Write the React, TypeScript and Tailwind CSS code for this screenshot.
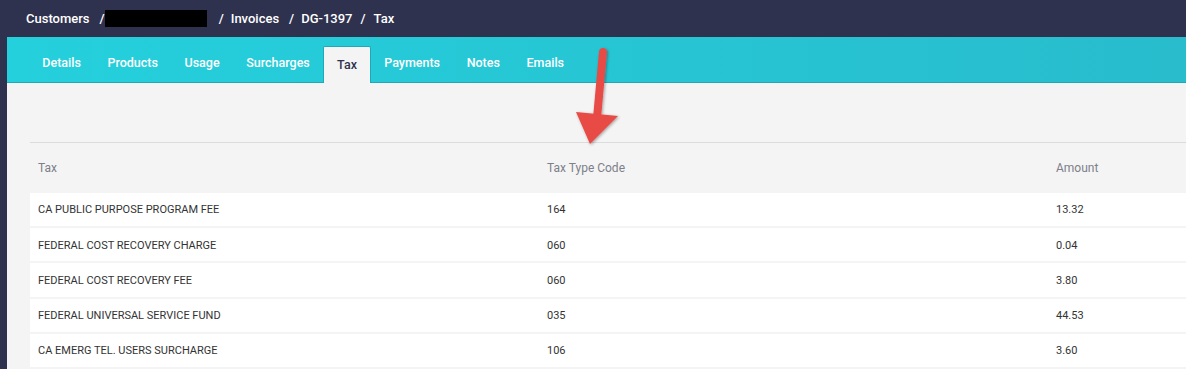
import React from 'react'

const tabs = ['Details', 'Products', 'Usage', 'Surcharges', 'Tax', 'Payments', 'Notes', 'Emails']

const rows = [
  ['CA PUBLIC PURPOSE PROGRAM FEE', '164', '13.32'],
  ['FEDERAL COST RECOVERY CHARGE', '060', '0.04'],
  ['FEDERAL COST RECOVERY FEE', '060', '3.80'],
  ['FEDERAL UNIVERSAL SERVICE FUND', '035', '44.53'],
  ['CA EMERG TEL. USERS SURCHARGE', '106', '3.60'],
]

function Arrow() {
  return (
    <svg width="60" height="110" viewBox="0 0 60 110" className="absolute left-[570px] top-[40px]">
      <defs>
        <filter id="sh" x="-50%" y="-50%" width="200%" height="200%">
          <feDropShadow dx="1" dy="1" stdDeviation="1.5" floodColor="#000" floodOpacity="0.35" />
        </filter>
      </defs>
      <g filter="url(#sh)">
        <line x1="33" y1="12" x2="27" y2="78" stroke="#e84b44" strokeWidth="8" strokeLinecap="round" />
        <polygon points="6,72 48,76 20,104" fill="#e84b44" />
      </g>
    </svg>
  )
}

export default function App() {
  return (
    <div
      className="relative h-[369px] w-[1186px] overflow-hidden bg-[#2f324f]"
      style={{ fontFamily: 'Roboto, "Noto Sans", sans-serif' }}
    >
      {/* breadcrumb */}
      <div className="flex h-[37px] items-center pl-[26px] text-[13px] font-medium text-white">
        <span>Customers</span>
        <span className="ml-[10px]">/</span>
        <span className="ml-[0px] h-[17px] w-[102px] bg-black" />
        <span className="ml-[12px]">/</span>
        <span className="ml-[7px]">Invoices</span>
        <span className="ml-[10px]">/</span>
        <span className="ml-[7px]">DG-1397</span>
        <span className="ml-[8px]">/</span>
        <span className="ml-[8px]">Tax</span>
      </div>

      <div className="ml-[7px] flex flex-col">
        {/* tab bar */}
        <div className="flex h-[46px] items-end border-b border-[#1fa9b8] bg-gradient-to-r from-[#24d0dc] to-[#28bccd] pl-[22px]">
          {tabs.map((t) =>
            t === 'Tax' ? (
              <div
                key={t}
                className="-mb-px flex h-[37px] items-center rounded-t-[2px] border border-b-0 border-[#1fa9b8] bg-[#f4f4f4] px-[13px] text-[12.5px] font-medium text-[#2f324f]"
              >
                {t}
              </div>
            ) : (
              <div key={t} className="flex h-[37px] items-center px-[13.3px] text-[12.5px] font-medium text-white">
                {t}
              </div>
            )
          )}
        </div>

        {/* content */}
        <div className="h-[300px] bg-[#f4f4f4] pl-[23px] pt-[59px]">
          <div className="border-t border-[#dcdcdc]">
            <div className="grid h-[50px] grid-cols-[509px_509px_1fr] items-center text-[12px] text-[#7d7f8a]">
              <div className="pl-[8px]">Tax</div>
              <div className="pl-[8px]">Tax Type Code</div>
              <div className="pl-[8px]">Amount</div>
            </div>
            <div className="flex flex-col gap-[2px]">
              {rows.map((r) => (
                <div
                  key={r[0]}
                  className="grid h-[33.2px] grid-cols-[509px_509px_1fr] items-center bg-white pt-[2px] text-[11px] text-[#333]"
                >
                  <div className="pl-[8px]">{r[0]}</div>
                  <div className="pl-[8px]">{r[1]}</div>
                  <div className="pl-[8px]">{r[2]}</div>
                </div>
              ))}
            </div>
          </div>
        </div>
      </div>

      <Arrow />
    </div>
  )
}
